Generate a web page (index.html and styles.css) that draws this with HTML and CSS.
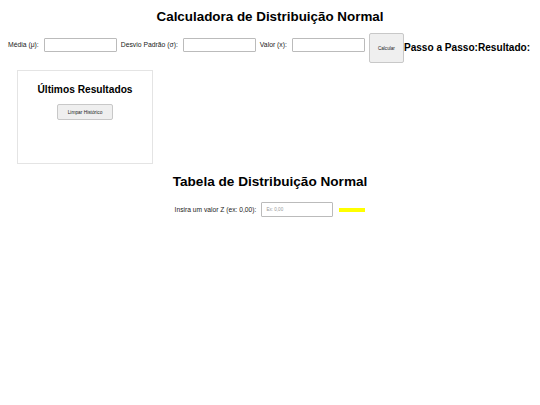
FILE: index.html
```html
<!DOCTYPE html>
<html lang="pt">
<head>
<meta charset="utf-8">
<title>Calculadora de Distribuição Normal</title>
<link rel="stylesheet" href="styles.css">
</head>
<body>
<h1 class="title">Calculadora de Distribuição Normal</h1>
<div class="calc-row">
  <label class="lbl">Média (μ):</label>
  <input class="field" type="text">
  <label class="lbl">Desvio Padrão (σ):</label>
  <input class="field" type="text">
  <label class="lbl">Valor (x):</label>
  <input class="field" type="text">
  <button class="btn-calc">Calcular</button>
  <span class="steps">Passo a Passo:</span><span class="steps">Resultado:</span>
</div>
<div class="history">
  <h2 class="history-title">Últimos Resultados</h2>
  <button class="btn-clear">Limpar Histórico</button>
</div>
<h2 class="table-title">Tabela de Distribuição Normal</h2>
<div class="z-row">
  <label class="z-lbl">Insira um valor Z (ex: 0,00):</label>
  <input class="z-field" type="text" placeholder="Ex: 0,00">
  <span class="z-bar"></span>
</div>
</body>
</html>
```
FILE: styles.css
```css
html, body {
  margin: 0;
  padding: 0;
  background: #fff;
}
body {
  font-family: "Liberation Sans", Arial, sans-serif;
  color: #000;
  width: 540px;
  height: 405px;
}
.title {
  margin: 0;
  padding-top: 9px;
  height: 24px;
  font-size: 13.4px;
  font-weight: bold;
  text-align: center;
  line-height: 16px;
}
.calc-row {
  display: flex;
  align-items: flex-start;
  padding-left: 8px;
  height: 37px;
}
.lbl {
  font-size: 6.8px;
  margin-top: 8px;
  line-height: 8px;
  color: #222;
}
.field {
  box-sizing: border-box;
  width: 73px;
  height: 14px;
  margin: 5px 4px 0 5px;
  border: 1px solid #bbb;
  border-radius: 1px;
  padding: 0;
  background: #fff;
}
.btn-calc {
  box-sizing: border-box;
  width: 35px;
  height: 30px;
  margin-left: 0;
  padding: 0;
  font-family: "Liberation Sans", Arial, sans-serif;
  font-size: 4.6px;
  background: #efefef;
  border: 1px solid #c8c8c8;
  border-radius: 2px;
  color: #222;
}
.steps {
  font-size: 10.1px;
  font-weight: bold;
  margin-top: 8px;
  line-height: 13px;
}
.history {
  box-sizing: border-box;
  margin-left: 17px;
  width: 136px;
  height: 94px;
  border: 1px solid #e4e4e4;
  display: flex;
  flex-direction: column;
  align-items: center;
}
.history-title {
  margin: 12px 0 0;
  font-size: 10.2px;
  line-height: 13px;
  font-weight: bold;
}
.btn-clear {
  box-sizing: border-box;
  margin-top: 8px;
  width: 56px;
  height: 16px;
  padding: 0;
  font-family: "Liberation Sans", Arial, sans-serif;
  font-size: 4.8px;
  background: #efefef;
  border: 1px solid #c8c8c8;
  border-radius: 2px;
  color: #222;
}
.table-title {
  margin: 10px 0 0;
  font-size: 13.6px;
  line-height: 15px;
  font-weight: bold;
  text-align: center;
}
.z-row {
  display: flex;
  justify-content: center;
  align-items: center;
  margin-top: 13px;
}
.z-lbl {
  font-size: 6.7px;
  color: #222;
}
.z-field {
  box-sizing: border-box;
  width: 72px;
  height: 15px;
  margin-left: 5px;
  padding: 0 4px;
  font-family: "Liberation Sans", Arial, sans-serif;
  font-size: 4.6px;
  border: 1px solid #bbb;
  border-radius: 1px;
}
.z-field::placeholder {
  color: #999;
}
.z-bar {
  display: block;
  width: 26px;
  height: 4px;
  margin-left: 6px;
  background: #ffff00;
}
```
